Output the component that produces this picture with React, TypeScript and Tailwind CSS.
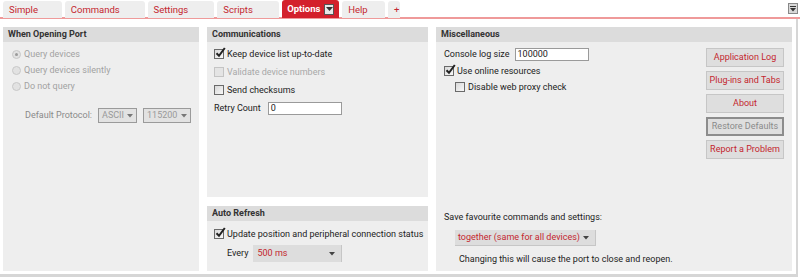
import React from 'react';

const RED = 'text-[#c4262e]';

function Tab({ label, active }: { label: string; active?: boolean }) {
  if (active) {
    return (
      <div className="h-[18px] px-[5px] flex items-center gap-[4px] bg-[#d3202b] rounded-t-[3px] text-white font-bold">
        <span>{label}</span>
        <span className="w-[11px] h-[11px] bg-[#e8e8e8] border border-[#555] flex items-center justify-center">
          <svg width="7" height="5" viewBox="0 0 7 5"><path d="M0 0h7L3.5 4z" fill="#333" /></svg>
        </span>
      </div>
    );
  }
  return (
    <div className={`h-[17px] px-[6px] flex items-center bg-[#eeeeee] rounded-t-[3px] ${RED}`}>{label}</div>
  );
}

function Checkbox({ checked, disabled }: { checked?: boolean; disabled?: boolean }) {
  return (
    <span className="relative inline-block w-[10px] h-[10px] shrink-0">
      <span
        className={`absolute inset-0 border ${disabled ? 'border-[#c4c4c4] bg-[#e4e4e4]' : 'border-[#6a6a6a] bg-gradient-to-br from-[#d8d8d8] to-[#f8f8f8]'}`}
      />
      {checked && (
        <svg className="absolute left-[1px] top-[-2px]" width="11" height="11" viewBox="0 0 11 11">
          <path d="M1.5 6.2 L4 8.8 L9.8 1" stroke="#222" strokeWidth="2" fill="none" />
        </svg>
      )}
    </span>
  );
}

function Radio({ checked }: { checked?: boolean }) {
  return (
    <span className="w-[9px] h-[9px] rounded-full border border-[#c8c8c8] bg-[#e2e2e2] flex items-center justify-center shrink-0">
      {checked && <span className="w-[3px] h-[3px] rounded-full bg-[#9a9a9a]" />}
    </span>
  );
}

function Caret({ color = '#555' }: { color?: string }) {
  return (
    <svg width="6" height="4" viewBox="0 0 6 4"><path d="M0 0h6L3 3.5z" fill={color} /></svg>
  );
}

function Header({ title }: { title: string }) {
  return <div className="h-[15px] bg-[#dcdcdc] pl-[5px] flex items-center font-bold text-[#333]">{title}</div>;
}

function Btn({ label, focus }: { label: string; focus?: boolean }) {
  return (
    <div
      className={`h-[19px] w-[78px] flex items-center justify-center bg-[#dedede] ${
        focus ? 'border-2 border-[#8c8c8c] text-[#8a8a8a]' : `border border-[#c6c6c6] ${RED}`
      }`}
    >
      {label}
    </div>
  );
}

export default function App() {
  return (
    <div className="w-[800px] h-[277px] bg-white text-[9px] leading-none whitespace-nowrap text-[#222] font-['Roboto',sans-serif] flex flex-col overflow-hidden">
      {/* tab strip */}
      <div className="h-[19px] flex items-start border-b-2 border-[#ef9a9a] pl-[3px] pr-[2px] text-[9.5px]">
        <div className="flex items-end gap-[3px] w-[397px]">
          <div className="w-[59px]"><Tab label="Simple" /></div>
          <div className="w-[80px]"><Tab label="Commands" /></div>
          <div className="w-[67px]"><Tab label="Settings" /></div>
          <div className="w-[62px]"><Tab label="Scripts" /></div>
          <div className="w-[57px]"><Tab label="Options" active /></div>
          <div className="w-[43px]"><Tab label="Help" /></div>
          <div className="w-[12px]"><Tab label="+" /></div>
        </div>
        <div className="flex-1" />
        <div className="mt-[3px] w-[10px] h-[11px] bg-[#d8d8d8] border border-[#888] flex flex-col items-center justify-center gap-[1px]">
          <span className="w-[6px] h-[1px] bg-[#333]" />
          <Caret color="#333" />
        </div>
      </div>

      {/* content */}
      <div className="flex-1 w-[798px] border-r-2 border-b-[3px] border-[#d6d6d6] pl-[3px] pr-[4px] pt-[8px] pb-[3px] flex gap-[8px]">
        {/* When Opening Port */}
        <div className="w-[196px] bg-[#eeeeee] flex flex-col">
          <Header title="When Opening Port" />
          <div className="pl-[9px] pt-[7px] flex flex-col gap-[6px] text-[#a2a2a2]">
            <div className="h-[10px] flex items-center gap-[3px]"><Radio checked /><span>Query devices</span></div>
            <div className="h-[10px] flex items-center gap-[3px]"><Radio /><span>Query devices silently</span></div>
            <div className="h-[10px] flex items-center gap-[3px]"><Radio /><span>Do not query</span></div>
          </div>
          <div className="mt-[17px] pl-[22px] flex items-center gap-[6px] text-[#8a8a8a]">
            <span>Default Protocol:</span>
            <div className="w-[39px] h-[15px] border border-[#9a9a9a] bg-[#e2e2e2] flex items-center justify-between px-[3px] text-[#999]">
              <span>ASCII</span><Caret color="#777" />
            </div>
            <div className="w-[48px] h-[15px] border border-[#9a9a9a] bg-[#e2e2e2] flex items-center justify-between px-[3px] text-[#999]">
              <span>115200</span><Caret color="#777" />
            </div>
          </div>
        </div>

        {/* middle column */}
        <div className="w-[221px] flex flex-col gap-[9px]">
          <div className="h-[170px] bg-[#eeeeee] flex flex-col">
            <Header title="Communications" />
            <div className="pl-[7px] pt-[7px] flex flex-col gap-[8px]">
              <div className="h-[10px] flex items-center gap-[3px]"><Checkbox checked /><span>Keep device list up-to-date</span></div>
              <div className="h-[10px] flex items-center gap-[3px] text-[#a8a8a8]"><Checkbox disabled /><span>Validate device numbers</span></div>
              <div className="h-[10px] flex items-center gap-[3px]"><Checkbox /><span>Send checksums</span></div>
              <div className="h-[10px] flex items-center gap-[7px]">
                <span>Retry Count</span>
                <div className="w-[74px] h-[13px] border border-[#9a9a9a] bg-white flex items-center pl-[2px]">0</div>
              </div>
            </div>
          </div>
          <div className="flex-1 bg-[#eeeeee] flex flex-col">
            <Header title="Auto Refresh" />
            <div className="pl-[7px] pt-[8px] flex flex-col gap-[6px]">
              <div className="h-[10px] flex items-center gap-[3px]"><Checkbox checked /><span>Update position and peripheral connection status</span></div>
              <div className="pl-[13px] flex items-center gap-[5px]">
                <span>Every</span>
                <div className={`w-[89px] h-[17px] bg-[#dddddd] border-r border-[#c6c6c6] flex items-center justify-between pl-[4px] pr-[6px] ${RED}`}>
                  <span>500 ms</span><Caret color="#444" />
                </div>
              </div>
            </div>
          </div>
        </div>

        {/* Miscellaneous */}
        <div className="flex-1 bg-[#eeeeee] flex flex-col">
          <Header title="Miscellaneous" />
          <div className="flex flex-1">
            <div className="flex-1 flex flex-col pl-[8px]">
              <div className="pt-[6px] flex items-center gap-[5px]">
                <span>Console log size</span>
                <div className="w-[74px] h-[13px] border border-[#9a9a9a] bg-white flex items-center pl-[2px]">100000</div>
              </div>
              <div className="mt-[5px] h-[10px] flex items-center gap-[3px]"><Checkbox checked /><span>Use online resources</span></div>
              <div className="mt-[6px] h-[10px] pl-[11px] flex items-center gap-[3px]"><Checkbox /><span>Disable web proxy check</span></div>
              <div className="flex-1" />
              <div className="mb-[7px] flex flex-col">
                <span>Save favourite commands and settings:</span>
                <div className={`mt-[8px] ml-[11px] w-[141px] h-[16px] bg-[#dddddd] border-r border-b border-[#c6c6c6] flex items-center justify-between pl-[3px] pr-[6px] ${RED}`}>
                  <span>together (same for all devices)</span><Caret color="#444" />
                </div>
                <span className="mt-[9px] ml-[15px]">Changing this will cause the port to close and reopen.</span>
              </div>
            </div>
            <div className="w-[86px] pt-[6px] flex flex-col gap-[4px]">
              <Btn label="Application Log" />
              <Btn label="Plug-ins and Tabs" />
              <Btn label="About" />
              <Btn label="Restore Defaults" focus />
              <Btn label="Report a Problem" />
            </div>
          </div>
        </div>
      </div>
    </div>
  );
}
